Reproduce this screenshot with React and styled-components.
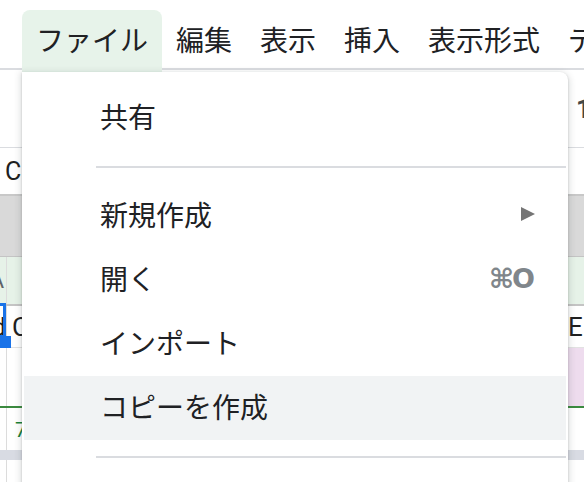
import React from 'react';
import styled, { createGlobalStyle } from 'styled-components';

const Global = createGlobalStyle`
  html, body { margin: 0; padding: 0; background: #fff; overflow: hidden; }
  body { width: 584px; height: 482px; font-family: "Noto Sans CJK JP", "Noto Sans", sans-serif; }
  #root { width: 584px; height: 482px; }
`;

const Page = styled.div`
  position: relative;
  width: 584px;
  height: 482px;
  overflow: hidden;
  background: #fff;
`;

const MenuBar = styled.nav`
  display: flex;
  align-items: stretch;
  height: 58px;
  padding: 10px 0 0 22px;
  border-bottom: 2px solid #dadce0;
  white-space: nowrap;
`;

const MenuTab = styled.div`
  position: relative;
  z-index: 2;
  flex-shrink: 0;
  padding: 15px 14px 0;
  font-size: 28px;
  line-height: 28px;
  color: #202124;
  border-radius: 8px 8px 0 0;
  background: ${(p) => (p.$active ? '#e7f3ea' : 'transparent')};
  margin-bottom: ${(p) => (p.$active ? '-4px' : '0')};
`;

const Sheet = styled.div`
  display: flex;
  flex-direction: column;
  font-family: Roboto, "Liberation Sans", sans-serif;
`;

const Toolbar = styled.div`
  display: grid;
  grid-template-columns: 1fr 8px;
  align-items: center;
  height: 77px;
  border-bottom: 1px solid #dadce0;
  white-space: nowrap;
`;

const ToolbarValue = styled.span`
  font-size: 26px;
  font-weight: 700;
  color: #444746;
`;

const FormulaBar = styled.div`
  display: flex;
  align-items: center;
  height: 46px;
  padding-left: 5px;
  border-bottom: 2px solid #c8c8c8;
  font-size: 25px;
  color: #1f1f1f;
`;

const GrayStrip = styled.div`
  height: 60px;
  background: #d9d9d9;
  border-bottom: 1px solid #c4c4c4;
`;

const GridRow = styled.div`
  display: grid;
  grid-template-columns: 7px 1fr 16px;
  height: ${(p) => p.$h}px;
  border-bottom: ${(p) => p.$line || '1px solid #e2e2e2'};
  background: ${(p) => p.$bg || '#fff'};
  white-space: nowrap;
`;

const Cell = styled.div`
  position: relative;
  display: flex;
  align-items: center;
  justify-content: ${(p) => (p.$end ? 'flex-end' : 'flex-start')};
  padding-left: ${(p) => p.$pl || 0}px;
  font-size: 26px;
  color: #1f1f1f;
  background: ${(p) => p.$bg || 'transparent'};
  border-right: ${(p) => (p.$rule ? '1px solid #dcdcdc' : 'none')};
  overflow: ${(p) => (p.$open ? 'visible' : 'hidden')};
`;

const HeadLetter = styled.span`
  font-size: 22px;
  color: #5f6368;
  padding-right: 2px;
`;

const Selection = styled.div`
  position: absolute;
  top: -3px;
  right: 0;
  bottom: 9px;
  left: -10px;
  border: 3px solid #1a73e8;
  pointer-events: none;
`;

const FillHandle = styled.div`
  position: absolute;
  left: 0;
  bottom: -1px;
  width: 11px;
  height: 12px;
  background: #1a73e8;
  z-index: 1;
`;

const GreenText = styled.span`
  align-self: flex-start;
  margin-top: 10px;
  font-size: 21px;
  color: #188038;
`;

const Band = styled.div`
  height: 10px;
  background: #d8dbe3;
`;

const Dropdown = styled.div`
  position: absolute;
  top: 72px;
  left: 22px;
  z-index: 3;
  width: 546px;
  padding: 14px 0 24px;
  background: #fff;
  border-radius: 0 8px 8px 8px;
  box-shadow: 0 2px 6px 2px rgba(60, 64, 67, 0.15), 0 1px 2px rgba(60, 64, 67, 0.3);
`;

const Item = styled.div`
  display: flex;
  align-items: center;
  height: 64px;
  box-sizing: border-box;
  margin: 0 2px;
  padding: 0 31px 4px 76px;
  font-size: 28px;
  color: #202124;
  background: ${(p) => (p.$hover ? '#f1f3f4' : 'transparent')};
`;

const Label = styled.span`
  flex: 1;
`;

const Shortcut = styled.span`
  font-family: "DejaVu Sans", sans-serif;
  font-weight: 700;
  font-size: 27px;
  color: #80868b;
  letter-spacing: -2px;
  margin-right: 2px;
`;

const Separator = styled.div`
  height: 2px;
  margin: 16px 2px 16px 74px;
  background: #dadce0;
`;

const Arrow = () => (
  <svg width="14" height="14" viewBox="0 0 14 14" aria-hidden="true">
    <polygon points="0,0 14,7 0,14" fill="#757575" />
  </svg>
);

const menus = ['ファイル', '編集', '表示', '挿入', '表示形式', 'データ'];

export default function App() {
  return (
    <Page>
      <Global />
      <MenuBar>
        {menus.map((m, i) => (
          <MenuTab key={m} $active={i === 0}>
            {m}
          </MenuTab>
        ))}
      </MenuBar>
      <Sheet>
        <Toolbar>
          <span />
          <ToolbarValue>100%</ToolbarValue>
        </Toolbar>
        <FormulaBar>C1</FormulaBar>
        <GrayStrip />
        <GridRow $h={47} $bg="#e6f2e8" $line="2px solid #c4c4c4">
          <Cell $end $rule>
            <HeadLetter>A</HeadLetter>
          </Cell>
          <Cell />
          <Cell />
        </GridRow>
        <GridRow $h={41}>
          <Cell $end $rule $open>
            d
            <Selection />
            <FillHandle />
          </Cell>
          <Cell $pl={5}>Customer</Cell>
          <Cell>EI</Cell>
        </GridRow>
        <GridRow $h={58} $line="2px solid #3b8a3f">
          <Cell $rule />
          <Cell />
          <Cell $bg="#eedcee" />
        </GridRow>
        <GridRow $h={42} $line="none">
          <Cell $rule />
          <Cell $pl={8}>
            <GreenText>7</GreenText>
          </Cell>
          <Cell />
        </GridRow>
        <Band />
        <GridRow $h={40} $line="none">
          <Cell $rule />
          <Cell />
          <Cell />
        </GridRow>
      </Sheet>
      <Dropdown role="menu">
        <Item>
          <Label>共有</Label>
        </Item>
        <Separator />
        <Item>
          <Label>新規作成</Label>
          <Arrow />
        </Item>
        <Item>
          <Label>開く</Label>
          <Shortcut>⌘O</Shortcut>
        </Item>
        <Item>
          <Label>インポート</Label>
        </Item>
        <Item $hover>
          <Label>コピーを作成</Label>
        </Item>
        <Separator />
        <Item>
          <Label>ダウンロード</Label>
          <Arrow />
        </Item>
      </Dropdown>
    </Page>
  );
}
